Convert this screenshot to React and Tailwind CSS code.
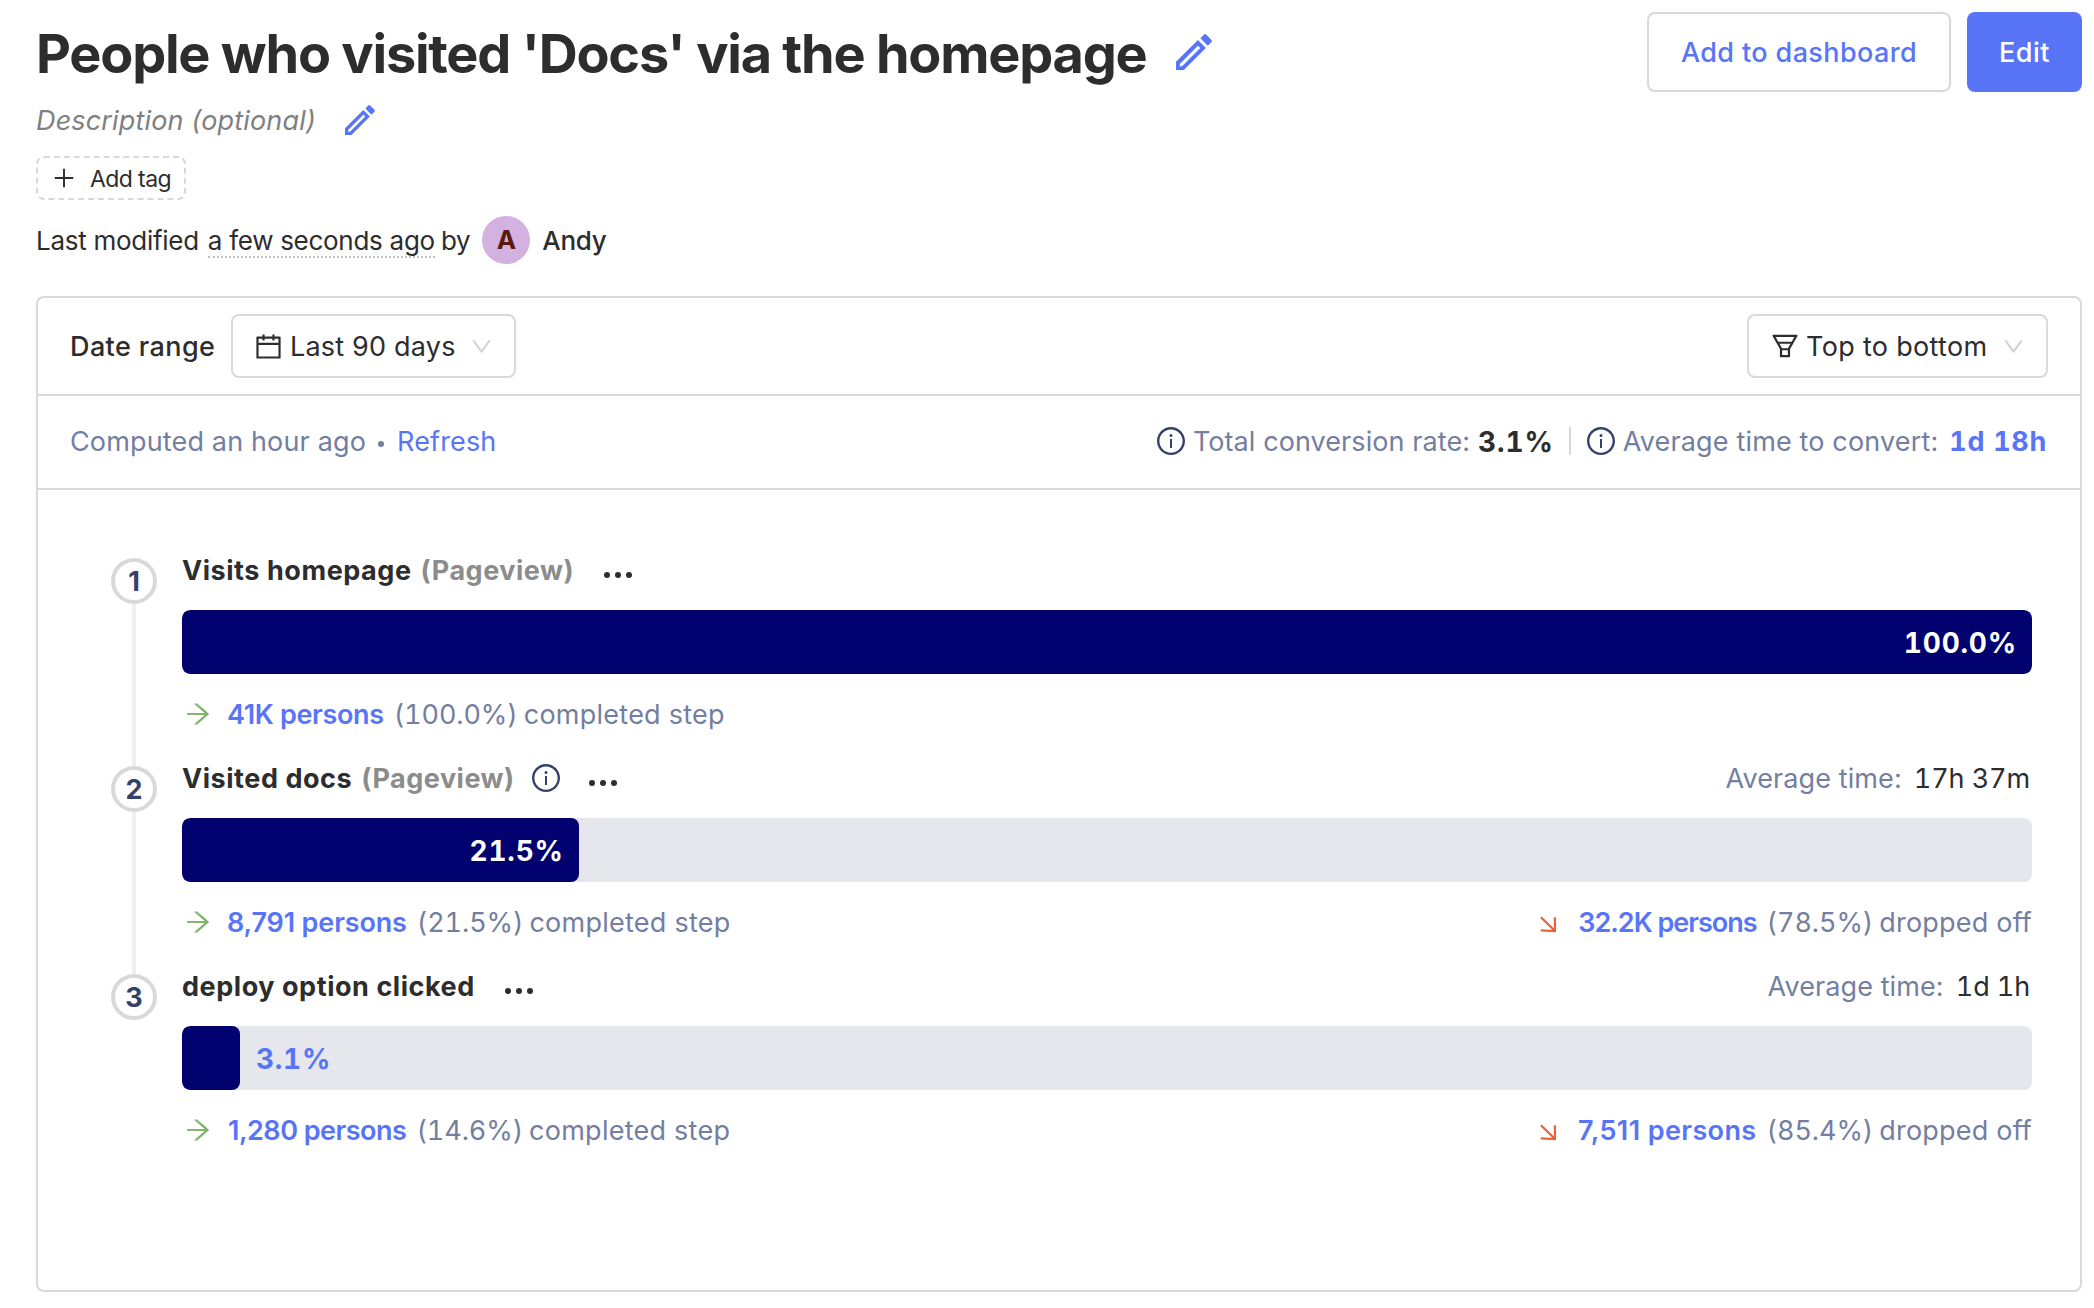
import {
  AiOutlineArrowRight,
  AiOutlineCalendar,
  AiOutlineDown,
  AiOutlineFunnelPlot,
  AiOutlineInfoCircle,
  AiOutlinePlus,
} from "react-icons/ai";

const steps = [
  {
    name: "Visits homepage",
    kind: "(Pageview)",
    percent: 100,
    label: "100.0%",
    completed: "41K persons",
    completedRate: "(100.0%)",
    personsTracking: "ml-[14px] tracking-[-0.35px]",
  },
  {
    name: "Visited docs",
    kind: "(Pageview)",
    info: true,
    percent: 21.45,
    label: "21.5%",
    completed: "8,791 persons",
    completedRate: "(21.5%)",
    personsTracking: "ml-[14px] tracking-[-0.15px]",
    dropped: "32.2K persons",
    droppedRate: "(78.5%)",
    droppedTracking: "tracking-[-1px]",
    time: "17h 37m",
    timeTracking: "tracking-[-0.1px]",
  },
  {
    name: "deploy option clicked",
    percent: 3.13,
    label: "3.1%",
    labelOutside: true,
    completed: "1,280 persons",
    completedRate: "(14.6%)",
    personsTracking: "ml-[15px] tracking-[-0.5px]",
    dropped: "7,511 persons",
    droppedRate: "(85.4%)",
    droppedTracking: "tracking-[0.4px]",
    time: "1d 1h",
    timeTracking: "tracking-[-0.1px]",
  },
];

function Pencil({ className }) {
  return (
    <svg viewBox="0 0 30 30" className={className} fill="currentColor">
      <path
        fillRule="evenodd"
        d="M0 23.2 18.3 5 24.9 11.6 6.5 30H0ZM3.2 24.9V26.8H5L20.2 11.6 18.3 9.7Z"
      />
      <path d="M20.3 3.5 23.2.6a1.5 1.5 0 0 1 2.1 0l4.1 4.1a1.5 1.5 0 0 1 0 2.1L26.5 9.7Z" />
    </svg>
  );
}

function DropArrow() {
  return (
    <svg viewBox="0 0 18 18" className="size-[17px] text-[#e8623a]" fill="none" stroke="currentColor" strokeWidth="2.4">
      <path d="M1 1.3 15.6 15.6M15.8 1.3V16L.8 15.2" />
    </svg>
  );
}

function Dots() {
  return (
    <span className="mt-2 flex gap-[5px]">
      <i className="size-[6px] rounded-full bg-[#2d2d2d]" />
      <i className="size-[6px] rounded-full bg-[#2d2d2d]" />
      <i className="size-[6px] rounded-full bg-[#2d2d2d]" />
    </span>
  );
}

function Step({ step, index, last }) {
  return (
    <li className="flex h-[208px]">
      <div className="mr-[25px] flex w-[46px] flex-col items-center pt-2">
        <div className="flex size-[46px] shrink-0 items-center justify-center rounded-full border-4 border-[#d9d9d9] pt-px font-[650] text-[#35416b]">
          {index + 1}
        </div>
        {!last && <div className="-mb-2 w-1 flex-1 bg-[#f0f0f0]" />}
      </div>
      <div className="min-w-0 flex-1">
        <div className="flex h-10 items-center pt-0.5">
          <span className="font-[650] tracking-[0.55px]">{step.name}</span>
          {step.kind && (
            <span className="ml-[9px] font-[650] tracking-[0.5px] text-[#8c8c8c]">{step.kind}</span>
          )}
          {step.info && <AiOutlineInfoCircle className="-mt-0.5 ml-[15px] size-8 text-[#35416b]" />}
          <span className={step.info ? "ml-[27px]" : "ml-[30px]"}>
            <Dots />
          </span>
          {step.time && (
            <span className="ml-auto flex pr-0.5">
              <span className="tracking-[0.1px] text-[#747ea1]">Average time:</span>
              <span className={"ml-[12px] tabular-nums " + step.timeTracking}>{step.time}</span>
            </span>
          )}
        </div>
        <div className="mt-5 flex h-16 items-center overflow-hidden rounded-lg bg-[#e5e7ed] text-[28px] font-bold tracking-[0.8px] tabular-nums">
          <div
            className="flex h-full items-center justify-end rounded-lg bg-[#00006e] pt-0.5 pr-[15px] text-white"
            style={{ width: `${step.percent}%` }}
          >
            {!step.labelOutside && step.label}
          </div>
          {step.labelOutside && <span className="ml-4 pt-0.5 text-[#5875f8]">{step.label}</span>}
        </div>
        <div className="mt-5 flex h-10 items-center pt-0.5 whitespace-nowrap text-[#747ea1]">
          <AiOutlineArrowRight className="-mt-0.5 ml-px size-[30px] text-[#7fb56c]" />
          <span className={"font-semibold text-[#5875f8] " + step.personsTracking}>{step.completed}</span>
          <span className="ml-[10px] tracking-[-0.1px] tabular-nums">{step.completedRate}</span>
          <span className="ml-[6px] tracking-[0.25px]">completed step</span>
          {step.dropped && (
            <span className="ml-auto flex items-center">
              <span className="mt-0.5">
                <DropArrow />
              </span>
              <span className={"ml-[21px] font-semibold text-[#5875f8] " + step.droppedTracking}>
                {step.dropped}
              </span>
              <span className="ml-[10px] tracking-[-0.1px] tabular-nums">{step.droppedRate}</span>
              <span className="ml-[6px] tracking-[0.2px]">dropped off</span>
            </span>
          )}
        </div>
      </div>
    </li>
  );
}

export default function App() {
  return (
    <div className="h-[1308px] overflow-hidden bg-white pt-3 pr-3 pl-9 font-['Inter','Liberation_Sans',sans-serif] text-[27px] leading-10 text-[#2d2d2d]">
      <header className="flex items-start justify-between">
        <div>
          <div className="flex h-[83px] items-center">
            <h1 className="text-[54px] leading-none font-[650] tracking-[-1.23px]">
              People who visited 'Docs' via the homepage
            </h1>
            <Pencil className="-mt-1 ml-[30px] size-9 text-[#5875f8]" />
          </div>
          <div className="flex h-12 items-center pt-0.5">
            <span className="pt-px tracking-[0.16px] text-[#808080] italic">Description (optional)</span>
            <Pencil className="ml-[29px] size-[30px] text-[#5875f8]" />
          </div>
          <button className="mt-[13px] flex h-11 w-[150px] items-center rounded-lg border-2 border-dashed border-[#d9d9d9] pl-[13px] text-[23px] tracking-[-0.6px]">
            <AiOutlinePlus className="size-[26px]" />
            <span className="ml-[13px] pt-px whitespace-nowrap">Add tag</span>
          </button>
          <div className="mt-4 flex h-12 items-center text-[26px] leading-8 tracking-[-0.28px]">
            <span className="mr-[9px] pt-0.5">Last modified</span>
            <span className="border-b-2 border-dotted border-[#bfbfbf] pt-[3px] leading-[30px]">a few seconds ago</span>
            <span className="ml-[6px] pt-0.5">by</span>
            <span className="mr-3 ml-3 flex size-12 items-center justify-center rounded-full bg-[#d3b1e0] font-[650] text-[#5a1a10]">
              A
            </span>
            <span className="pt-0.5 font-medium">Andy</span>
          </div>
        </div>
        <div className="flex gap-4 font-medium">
          <button className="h-20 w-[304px] rounded-lg border-2 border-[#d9d9d9] pt-0.5 tracking-[0.38px] text-[#5875f8]">
            Add to dashboard
          </button>
          <button className="h-20 w-[115px] rounded-lg bg-[#5875f8] pt-0.5 tracking-[0.5px] text-white">Edit</button>
        </div>
      </header>

      <main className="mt-8 h-[996px] rounded-lg border-2 border-[#d9d9d9]">
        <div className="flex h-[98px] items-center border-b-2 border-[#d9d9d9] pr-8 pl-8">
          <span className="w-[161px] pt-px font-medium tracking-[0.4px]">Date range</span>
          <button className="flex h-16 w-[285px] items-center rounded-lg border-2 border-[#d9d9d9] pl-5">
            <AiOutlineCalendar className="size-[31px]" />
            <span className="ml-[6px] pt-px tracking-[0.2px]">Last 90 days</span>
            <AiOutlineDown className="ml-[13px] size-[25px] text-[#d0d0d0]" />
          </button>
          <button className="ml-auto flex h-16 w-[301px] items-center rounded-lg border-2 border-[#d9d9d9] pl-5">
            <AiOutlineFunnelPlot className="size-8" />
            <span className="ml-[5px] pt-px tracking-[0.32px]">Top to bottom</span>
            <AiOutlineDown className="ml-[14px] size-[25px] text-[#d0d0d0]" />
          </button>
        </div>
        <div className="flex h-[94px] items-center border-b-2 border-[#d9d9d9] pr-[33px] pl-8 text-[#747ea1]">
          <span className="tracking-[0.15px]">Computed an hour ago</span>
          <i className="mx-[12px] mt-1 size-[6px] rounded-full bg-[#747ea1]" />
          <span className="ml-px tracking-[0.15px] text-[#5875f8]">Refresh</span>
          <AiOutlineInfoCircle className="-mt-0.5 ml-auto size-8 text-[#35416b]" />
          <span className="ml-[6px] tracking-[0.08px]">Total conversion rate:</span>
          <span className="ml-[8px] text-[28px] font-bold tracking-[0.9px] text-[#2d2d2d] tabular-nums">3.1%</span>
          <i className="-mt-0.5 mr-[14px] ml-[15px] h-7 w-0.5 bg-[#d9d9d9]" />
          <AiOutlineInfoCircle className="-mt-0.5 size-8 text-[#35416b]" />
          <span className="ml-[6px] tracking-[0.15px]">Average time to convert:</span>
          <span className="ml-[11px] font-bold tracking-[0.7px] text-[#5875f8] tabular-nums">1d 18h</span>
        </div>
        <ol className="pt-[60px] pr-12 pl-[73px]">
          {steps.map((step, i) => (
            <Step key={step.name} step={step} index={i} last={i === steps.length - 1} />
          ))}
        </ol>
      </main>
    </div>
  );
}
